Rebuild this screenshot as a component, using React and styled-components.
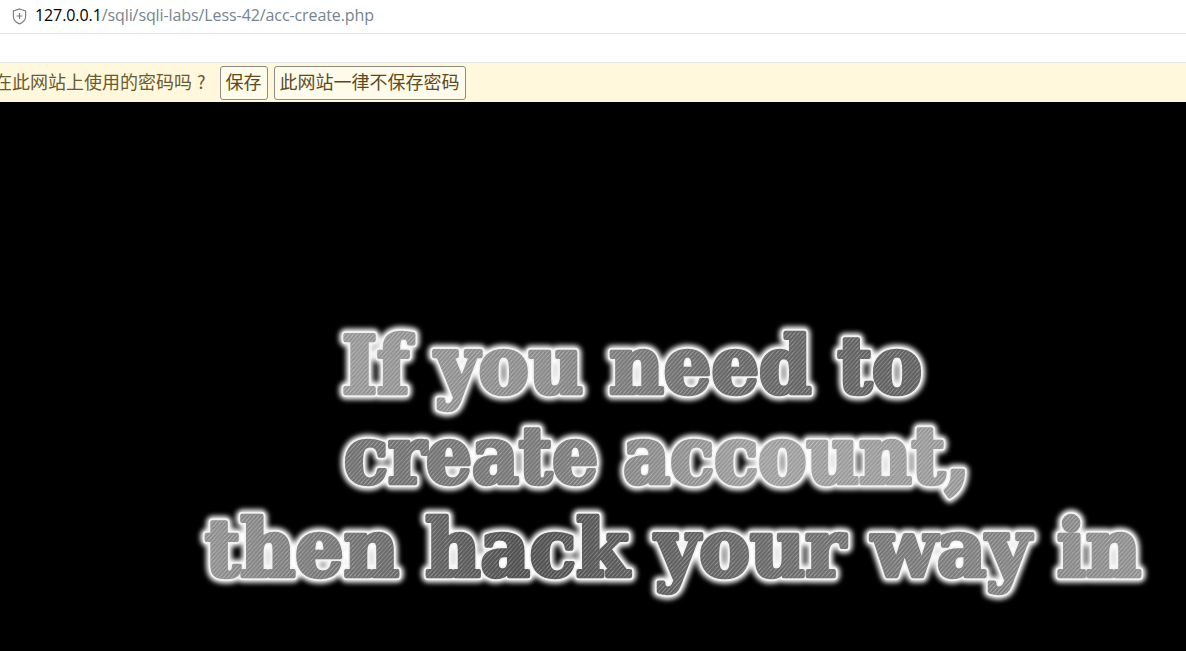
import React from "react";
import styled, { createGlobalStyle } from "styled-components";

const GlobalStyle = createGlobalStyle`
  html, body {
    margin: 0;
    padding: 0;
    background: #000;
    overflow: hidden;
  }
`;

const Page = styled.div`
  width: 1186px;
  height: 651px;
  overflow: hidden;
  display: flex;
  flex-direction: column;
`;

const AddressBar = styled.div`
  height: 33px;
  flex: none;
  background: #fff;
  border-bottom: 1px solid #e6e6e6;
  display: flex;
  align-items: center;
  padding-left: 12px;
  gap: 8px;
`;

const Url = styled.div`
  font-family: "Open Sans", "Liberation Sans", sans-serif;
  font-size: 16px;
  color: #76848f;
  margin-top: -3px;
  letter-spacing: -0.09px;
  span {
    color: #000;
  }
`;

const Spacer = styled.div`
  height: 28px;
  flex: none;
  background: #fff;
  border-bottom: 1px solid #e6e6e6;
`;

const InfoBar = styled.div`
  height: 39px;
  flex: none;
  background: #fff8dc;
  display: flex;
  align-items: center;
  margin-left: -6px;
  font-family: "Noto Sans CJK SC", sans-serif;
  font-size: 18px;
  color: #6a5a30;
  white-space: nowrap;
`;

const Prompt = styled.div`
  margin-right: 14px;
  padding-bottom: 3px;
`;

const Question = styled.span`
  margin-left: 5px;
`;

const SaveButton = styled.button`
  height: 34px;
  padding: 0 5px 3px;
  margin-right: 6px;
  background: #fffbea;
  border: 1px solid #8c8c86;
  border-radius: 3px;
  font: inherit;
  color: #5c4a1e;
`;

const Banner = styled.div`
  flex: 1;
  background: #000;
`;

const Line = styled.text`
  font-family: "DejaVu Serif", serif;
  font-weight: 700;
  font-size: 78px;
`;

const lines = [
  { id: "a", text: "If you need to", x: 342, y: 393, len: 580, stops: ["#a0a0a0", "#949494", "#6e6e6e", "#666"] },
  { id: "b", text: "create account,", x: 344, y: 483, len: 626, stops: ["#777", "#808080", "#a8a8a8", "#a0a0a0"] },
  { id: "c", text: "then hack your way in", x: 205, y: 576, len: 936, stops: ["#999", "#555", "#777", "#999"] },
];

const Headline = () => (
  <svg width="1186" height="549" viewBox="0 102 1186 549" style={{ display: "block" }}>
    <defs>
      <pattern id="hatch" width="3" height="3" patternUnits="userSpaceOnUse" patternTransform="rotate(-48)">
        <rect width="3" height="1" fill="#fff" opacity="0.16" />
        <rect y="1.6" width="3" height="0.8" fill="#000" opacity="0.1" />
      </pattern>
      <filter id="glow" x="-5%" y="-20%" width="110%" height="140%">
        <feGaussianBlur stdDeviation="2.4" />
      </filter>
      {lines.map((l) => (
        <linearGradient key={l.id} id={l.id} gradientUnits="userSpaceOnUse" x1={l.x} x2={l.x + l.len} y1="0" y2="0">
          {l.stops.map((c, i) => (
            <stop key={i} offset={i / (l.stops.length - 1)} stopColor={c} />
          ))}
        </linearGradient>
      ))}
    </defs>
    {lines.map((l) => {
      const shared = { x: l.x, y: l.y, textLength: l.len, lengthAdjust: "spacingAndGlyphs" };
      return (
        <g key={l.id}>
          <Line {...shared} fill="#fff" stroke="#fff" strokeWidth="13" strokeLinejoin="round" filter="url(#glow)">
            {l.text}
          </Line>
          <Line {...shared} fill="#f2f2f2" stroke="#f2f2f2" strokeWidth="8" strokeLinejoin="round">
            {l.text}
          </Line>
          <Line {...shared} fill={`url(#${l.id})`} stroke={`url(#${l.id})`} strokeWidth="4.5" strokeLinejoin="round">
            {l.text}
          </Line>
          <Line {...shared} fill="url(#hatch)" stroke="url(#hatch)" strokeWidth="4.5" strokeLinejoin="round">
            {l.text}
          </Line>
        </g>
      );
    })}
  </svg>
);

const ShieldIcon = () => (
  <svg width="15" height="17" viewBox="0 0 15 17" fill="none" stroke="#808080" strokeWidth="1.2">
    <path d="M7.5 1 L13.6 3 V8.5 C13.6 12 10.8 14.5 7.5 15.9 C4.2 14.5 1.4 12 1.4 8.5 V3 Z" />
    <path d="M7.5 5 V11 M4.5 8 H10.5" />
  </svg>
);

export default function App() {
  return (
    <Page>
      <GlobalStyle />
      <AddressBar>
        <ShieldIcon />
        <Url>
          <span>127.0.0.1</span>/sqli/sqli-labs/Less-42/acc-create.php
        </Url>
      </AddressBar>
      <Spacer />
      <InfoBar lang="zh-Hans">
        <Prompt>
          在此网站上使用的密码吗<Question>?</Question>
        </Prompt>
        <SaveButton>保存</SaveButton>
        <SaveButton>此网站一律不保存密码</SaveButton>
      </InfoBar>
      <Banner>
        <Headline />
      </Banner>
    </Page>
  );
}
